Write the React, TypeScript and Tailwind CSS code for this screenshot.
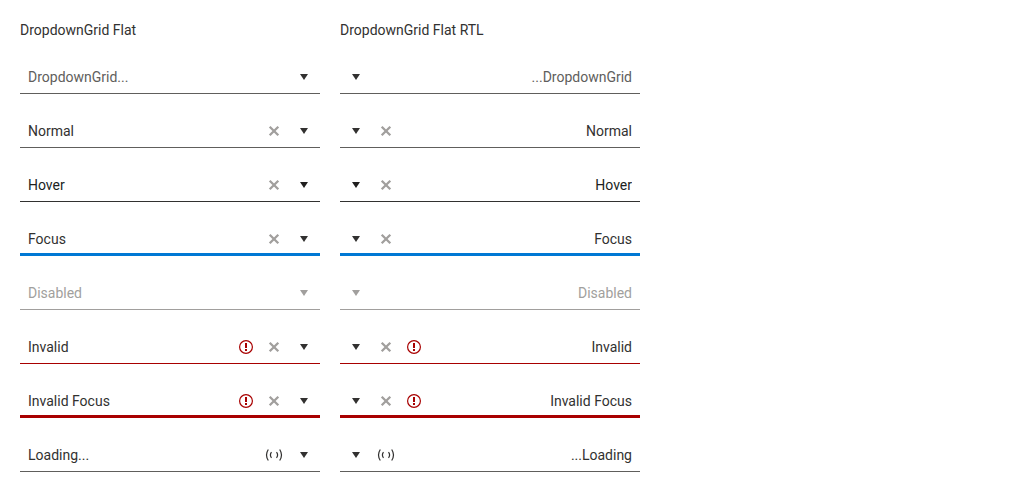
import clsx from "clsx";

type State =
  | "placeholder"
  | "normal"
  | "hover"
  | "focus"
  | "disabled"
  | "invalid"
  | "invalidFocus"
  | "loading";

interface Item {
  text: string;
  state: State;
}

const items: Item[] = [
  { text: "DropdownGrid...", state: "placeholder" },
  { text: "Normal", state: "normal" },
  { text: "Hover", state: "hover" },
  { text: "Focus", state: "focus" },
  { text: "Disabled", state: "disabled" },
  { text: "Invalid", state: "invalid" },
  { text: "Invalid Focus", state: "invalidFocus" },
  { text: "Loading...", state: "loading" },
];

const stateClasses: Record<State, string> = {
  placeholder: "border-b border-[#605e5c] text-[#323130]",
  normal: "border-b border-[#605e5c] text-[#323130]",
  hover: "border-b border-[#323130] text-[#201f1e]",
  focus: "border-b-3 border-[#0078d4] text-[#323130]",
  disabled: "border-b border-[#a19f9d] text-[#a19f9d]",
  invalid: "border-b border-[#a80000] text-[#323130]",
  invalidFocus: "border-b-3 border-[#a80000] text-[#323130]",
  loading: "border-b border-[#605e5c] text-[#323130]",
};

function ClearIcon() {
  return (
    <svg width="16" height="16" viewBox="0 0 16 16" aria-hidden="true">
      <path d="M3.7 3.7 12.3 12.3M12.3 3.7 3.7 12.3" fill="none" stroke="currentColor" strokeWidth="2.3" />
    </svg>
  );
}

function ArrowIcon() {
  return (
    <svg width="16" height="16" viewBox="0 0 16 16" aria-hidden="true">
      <path d="M4 5h8l-4 6z" fill="currentColor" />
    </svg>
  );
}

function WarningIcon() {
  return (
    <svg width="16" height="16" viewBox="0 0 16 16" role="img" aria-label="Invalid value">
      <circle cx="8" cy="8" r="6.4" fill="none" stroke="currentColor" strokeWidth="1.2" />
      <path d="M7 4h2v5H7zM7 10h2v2H7z" fill="currentColor" />
    </svg>
  );
}

function LoadingIcon() {
  return (
    <svg width="18" height="16" viewBox="0 0 18 16" role="img" aria-label="Loading">
      <path
        d="M3.3 2.5Q-.3 8 3.3 13.5M14.7 2.5Q18.3 8 14.7 13.5M6.5 5.2Q4.3 8 6.5 10.8M11.5 5.2Q13.7 8 11.5 10.8"
        fill="none"
        stroke="currentColor"
        strokeWidth="1.2"
      />
    </svg>
  );
}

function DropdownGrid({ text, state }: Item) {
  const disabled = state === "disabled";
  const invalid = state === "invalid" || state === "invalidFocus";
  const clearable = !disabled && state !== "placeholder" && state !== "loading";
  return (
    <div className={clsx("flex h-8 items-start", stateClasses[state])}>
      <input
        type="text"
        role="combobox"
        aria-expanded={false}
        aria-label={text}
        aria-invalid={invalid}
        disabled={disabled}
        placeholder={state === "placeholder" ? text : undefined}
        defaultValue={state === "placeholder" ? undefined : text}
        className="h-[29px] min-w-0 flex-1 bg-transparent px-2 text-sm outline-none placeholder:text-[#605e5c]"
      />
      {invalid && (
        <span className="flex h-[30px] w-7 shrink-0 items-center justify-center text-[#a80000]">
          <WarningIcon />
        </span>
      )}
      {clearable && (
        <button
          type="button"
          aria-label={`Clear ${text}`}
          className="flex h-[30px] w-7 shrink-0 items-center justify-center text-[#a19f9d]"
        >
          <ClearIcon />
        </button>
      )}
      {state === "loading" && (
        <span className="flex h-[30px] w-7 shrink-0 items-center justify-center">
          <LoadingIcon />
        </span>
      )}
      <button
        type="button"
        aria-label={`Open ${text}`}
        disabled={disabled}
        className="flex h-[30px] w-8 shrink-0 items-center justify-center"
      >
        <ArrowIcon />
      </button>
    </div>
  );
}

function Column({ title, dir }: { title: string; dir: "ltr" | "rtl" }) {
  return (
    <section className="min-w-0 max-w-[300px] flex-1">
      <h2 className="text-sm text-[#323130]">{title}</h2>
      <div dir={dir} className="mt-[22px] flex flex-col gap-[22px]">
        {items.map((item) => (
          <DropdownGrid key={item.state} {...item} />
        ))}
      </div>
    </section>
  );
}

export default function App() {
  return (
    <main className="flex gap-5 bg-white p-5 font-['Roboto',sans-serif]">
      <Column title="DropdownGrid Flat" dir="ltr" />
      <Column title="DropdownGrid Flat RTL" dir="rtl" />
    </main>
  );
}
